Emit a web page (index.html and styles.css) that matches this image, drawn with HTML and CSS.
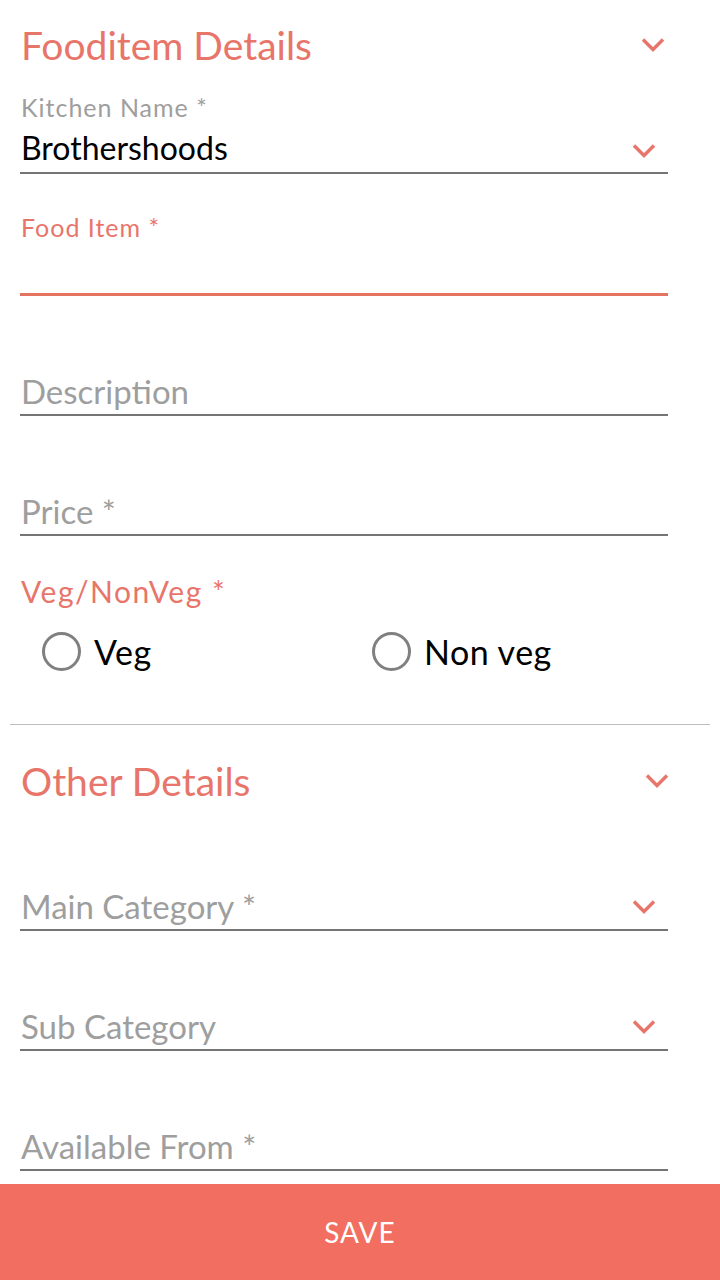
FILE: index.html
```html
<!DOCTYPE html>
<html>
<head>
<meta charset="utf-8">
<link rel="stylesheet" href="styles.css">
</head>
<body>
<div class="page">
  <section class="sec">
    <div class="head">
      <span class="title">Fooditem Details</span>
      <svg class="chev-head" width="24" height="16" viewBox="0 0 24 16"><path d="M2 2.5 L12 12.5 L22 2.5" fill="none" stroke="#e8756a" stroke-width="3.4"/></svg>
    </div>
    <div class="field field-kitchen">
      <div class="label gray small">Kitchen Name *</div>
      <div class="row">
        <span class="value">Brothershoods</span>
        <svg class="chev chev-row" width="24" height="16" viewBox="0 0 24 16"><path d="M2 2.5 L12 12.5 L22 2.5" fill="none" stroke="#e8756a" stroke-width="3.4"/></svg>
      </div>
    </div>
    <div class="field field-food">
      <div class="label accent small">Food Item *</div>
    </div>
    <div class="field field-plain">
      <span class="placeholder">Description</span>
    </div>
    <div class="field field-plain">
      <span class="placeholder">Price *</span>
    </div>
    <div class="veg-label accent">Veg/NonVeg *</div>
    <div class="radios">
      <label class="radio radio-first"><span class="circle"></span><span class="rtext">Veg</span></label>
      <label class="radio"><span class="circle"></span><span class="rtext">Non veg</span></label>
    </div>
  </section>
  <hr class="divider">
  <section class="sec">
    <div class="head head2">
      <span class="title">Other Details</span>
      <svg class="chev-head chev-head2" width="24" height="16" viewBox="0 0 24 16"><path d="M2 2.5 L12 12.5 L22 2.5" fill="none" stroke="#e8756a" stroke-width="3.4"/></svg>
    </div>
    <div class="field field-select field-first">
      <span class="placeholder">Main Category *</span>
      <svg class="chev" width="24" height="16" viewBox="0 0 24 16"><path d="M2 2.5 L12 12.5 L22 2.5" fill="none" stroke="#e8756a" stroke-width="3.4"/></svg>
    </div>
    <div class="field field-select">
      <span class="placeholder">Sub Category</span>
      <svg class="chev" width="24" height="16" viewBox="0 0 24 16"><path d="M2 2.5 L12 12.5 L22 2.5" fill="none" stroke="#e8756a" stroke-width="3.4"/></svg>
    </div>
    <div class="field field-plain">
      <span class="placeholder">Available From *</span>
    </div>
  </section>
  <div class="save">SAVE</div>
</div>
</body>
</html>
```
FILE: styles.css
```css
html, body {
  margin: 0;
  padding: 0;
  background: #ffffff;
}
body {
  font-family: "Lato", "Noto Sans", sans-serif;
  width: 720px;
  height: 1280px;
  overflow: hidden;
}
.page {
  position: relative;
  height: 1280px;
}
.sec {
  padding: 0 52px 0 20px;
}
.head {
  height: 90px;
  display: flex;
  justify-content: space-between;
  align-items: center;
}
.head2 {
  height: 112px;
}
.title {
  font-size: 39px;
  color: #e8756a;
  padding-left: 1px;
  line-height: 42px;
}
.chev-head {
  margin-right: 3px;
  margin-top: 0;
}
.chev-head2 {
  margin-right: -1px;
}
.field {
  border-bottom: 2px solid #757575;
  display: flex;
  flex-direction: column;
  justify-content: flex-end;
}
.field-kitchen {
  height: 82px;
}
.label {
  padding-left: 1px;
}
.small {
  font-size: 25px;
  line-height: 30px;
  letter-spacing: 1px;
}
.gray {
  color: #9e9e9e;
}
.accent {
  color: #e8756a;
}
.row {
  display: flex;
  justify-content: space-between;
  align-items: center;
  height: 50px;
}
.value {
  font-size: 32px;
  color: #000;
  padding-left: 1px;
}
.chev {
  margin-right: 12px;
}
.chev-row {
  margin-top: 8px;
}
.field-food {
  height: 119px;
  border-bottom: 3px solid #e4735f;
  justify-content: flex-start;
}
.field-food .label {
  margin-top: 38px;
}
.field-plain {
  height: 118px;
}
.placeholder {
  font-size: 33px;
  color: #9e9e9e;
  line-height: 46px;
  padding-left: 1px;
}
.field-select {
  height: 118px;
  flex-direction: row;
  justify-content: space-between;
  align-items: flex-end;
}
.field-select .chev {
  margin-bottom: 14px;
}
.field-first {
  height: 92px;
}
.veg-label {
  font-size: 30px;
  line-height: 34px;
  letter-spacing: 1.5px;
  margin-top: 38px;
  padding-left: 1px;
}
.radios {
  display: flex;
  height: 86px;
  align-items: center;
  padding-left: 22px;
}
.radio {
  display: flex;
  align-items: center;
  flex-shrink: 0;
}
.radio-first {
  width: 330px;
}
.circle {
  border: 3px solid #808080;
  border-radius: 50%;
  box-sizing: border-box;
  width: 39px;
  height: 39px;
  flex-shrink: 0;
}
.rtext {
  font-size: 34px;
  letter-spacing: 0.5px;
  color: #000;
  margin-left: 13px;
}
.divider {
  border: 0;
  border-top: 1px solid #bdbdbd;
  margin: 30px 10px 0 10px;
  height: 0;
}
.save {
  position: absolute;
  left: 0;
  right: 0;
  bottom: 0;
  height: 96px;
  background: #f26e60;
  color: #ffffff;
  font-size: 28px;
  display: flex;
  align-items: center;
  justify-content: center;
  letter-spacing: 1px;
}
```
